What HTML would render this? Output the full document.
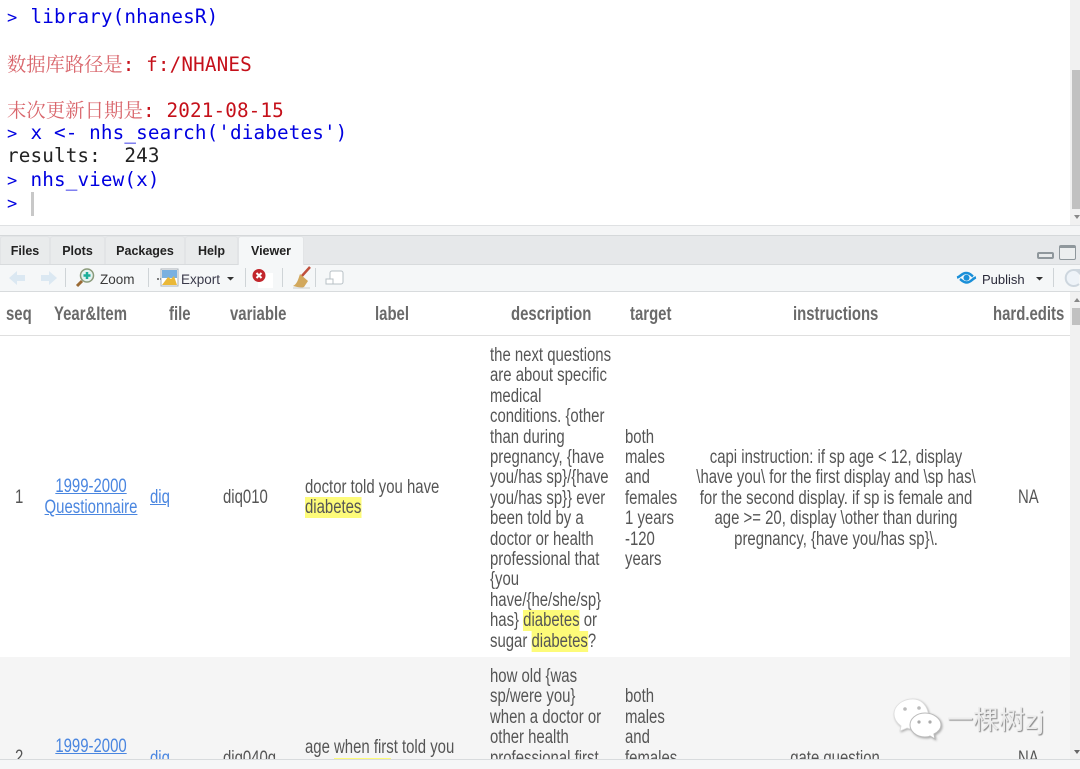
<!DOCTYPE html>
<html><head><meta charset="utf-8"><style>
html,body{margin:0;padding:0;width:1080px;height:769px;overflow:hidden;background:#fff}
div,span{box-sizing:border-box}
.a{position:absolute}
.c{position:absolute;left:7px;font:19.3px/23px "DejaVu Sans Mono","Liberation Mono",monospace;white-space:pre;letter-spacing:.13px;color:#0000e0}
.c b{display:inline-block;width:11.75px;font-weight:normal;font-size:17px}
.r{color:#c5101a}
.z{font-family:"Noto Serif CJK SC",serif;font-size:19.3px;color:#d9666c;letter-spacing:0}
.tab{position:absolute;top:236px;height:28px;background:#e9ebec;border:1px solid #e2e4e6;border-bottom:none;border-radius:3px 3px 0 0;font:bold 12.5px/29px "Liberation Sans",sans-serif;color:#222;text-align:center}
.tb{position:absolute;font:13.500px/17px "Liberation Sans",sans-serif;color:#333;white-space:pre}
.sep{position:absolute;top:268px;width:1px;height:19px;background:#cfd4d7}
.t{position:absolute;font:19px/20.4px "Liberation Sans",sans-serif;color:#555;white-space:pre;transform:scaleX(.785);transform-origin:0 0;margin-top:2px}
.m{transform-origin:50% 0;text-align:center;width:400px}
.h{font-weight:bold;color:#6a6a6a;margin-top:1.500px}
a{color:#4a86e0;text-decoration:underline}
mark{background:#fdfb79;color:#555}
</style></head><body>
<div class="a" style="left:1070px;top:0;width:10px;height:225px;background:#f1f1f1"></div>
<div class="a" style="left:1072px;top:70px;width:8px;height:139px;background:#c1c1c1"></div>
<div class="a" style="left:1074px;top:215px;width:0;height:0;border:3px solid transparent;border-top:4px solid #888"></div>

<div class="c" style="top:5px"><b>&gt;</b> library(nhanesR)</div>
<div class="c r" style="top:52px"><span class="z">数据库路径是</span>: f:/NHANES</div>
<div class="c r" style="top:98px"><span class="z" style="letter-spacing:.15px">末次更新日期是</span>: 2021-08-15</div>
<div class="c" style="top:121px"><b>&gt;</b> x &lt;- nhs_search('diabetes')</div>
<div class="c" style="top:144px;color:#222">results:  243</div>
<div class="c" style="top:168px"><b>&gt;</b> nhs_view(x)</div>
<div class="c" style="top:191px"><b>&gt;</b></div>
<div class="a" style="left:31px;top:192px;width:3px;height:24px;background:#c8c8c8"></div>

<div class="a" style="left:0;top:225px;width:1080px;height:11px;background:#f4f5f6;border-top:1px solid #dfe1e3"></div>
<div class="a" style="left:0;top:235px;width:1080px;height:29px;background:#e6e8ea;border-top:1px solid #d5d8da"></div>
<div class="tab" style="left:0;width:50px">Files</div>
<div class="tab" style="left:50px;width:55px">Plots</div>
<div class="tab" style="left:105px;width:80px">Packages</div>
<div class="tab" style="left:185px;width:53px">Help</div>
<div class="tab" style="left:238px;width:66px;background:#f5f7f8;height:29px;z-index:2">Viewer</div>
<div class="a" style="left:1037px;top:252px;width:17px;height:7px;background:#e8eaeb;border:2px solid #8f979c;border-radius:2px"></div>
<div class="a" style="left:1059px;top:245px;width:17px;height:15px;border:1.5px solid #8f979c;border-top:3px solid #8f979c;border-radius:2px;background:#eceeef"></div>

<div class="a" style="left:0;top:264px;width:1080px;height:28px;background:#f5f7f8;border-top:1px solid #d8dbdd;border-bottom:1px solid #d8dbdd"></div>
<svg class="a" style="left:0;top:262px" width="1080" height="32">
<path d="M9 16l8-7v4h8v6h-8v4z" fill="#dbe8f2"/>
<path d="M57 16l-8-7v4h-8v6h8v4z" fill="#dbe8f2"/>
<circle cx="87" cy="13.500" r="6.500" fill="#e4f2f0" stroke="#8a9a7a" stroke-width="1.500"/>
<path d="M87 10v7M83.500 13.500h7" stroke="#1cae9a" stroke-width="2.500"/>
<path d="M82 19l-5 5" stroke="#9a6a34" stroke-width="3"/>
<path d="M157 17h8" stroke="#555" stroke-width="1.500" stroke-dasharray="2 1"/>
<rect x="161" y="7" width="17" height="17" fill="#fff" stroke="#aab2b8"/>
<path d="M162 8h15v8h-15z" fill="#7ab0e0"/><path d="M162 23l6-8 3 2 3-3 3 9z" fill="#eab838"/>
<rect x="258" y="11" width="15" height="15" fill="#fff"/>
<circle cx="259" cy="13.500" r="6.500" fill="#c2262c"/>
<path d="M256.500 11l5 5M261.500 11l-5 5" stroke="#fff" stroke-width="2"/>
<path d="M310 5l-9 10" stroke="#c0503c" stroke-width="2.500"/>
<path d="M300 12l8 7-4 6c-3 1-7 0-11-1 4-2 5-6 7-12z" fill="#d2a85c"/>
<path d="M293 26h17" stroke="#ccc" stroke-width="1"/>
<rect x="330" y="9" width="13" height="13" rx="2" fill="#fff" stroke="#b8c0c6"/>
<rect x="326" y="17" width="7" height="5" fill="#fff" stroke="#b8c0c6"/>
<path d="M957 15.500c3-.5 5-4.500 9-4.500s5 2 7 3.500M976 15.500c-3 .5-5 5-9 5s-5-2-7-3.500" fill="none" stroke="#1a8fd8" stroke-width="2.500"/>
<circle cx="966.500" cy="15.800" r="3" fill="#1a8fd8"/>
<path d="M1036 15h7l-3.500 3.500zM227 15h7l-3.500 3.500z" fill="#333"/>
<path d="M1079 10a8 8 0 1 0 0 12" fill="#eef3f8" stroke="#cdd6de" stroke-width="2"/>
<path d="M1074 7h6v6z" fill="#cdd6de"/>
</svg>
<div class="sep" style="left:65px"></div><div class="sep" style="left:148px"></div><div class="sep" style="left:245px"></div><div class="sep" style="left:282px"></div><div class="sep" style="left:315px"></div><div class="sep" style="left:1053px"></div>
<div class="tb" style="left:100px;top:271px;color:#3a3a3a">Zoom</div>
<div class="tb" style="left:181px;top:271px;color:#3a3a4a">Export</div>
<div class="tb" style="left:982px;top:271px;color:#2a2a3a;font-size:13px">Publish</div>

<div class="a" style="left:0;top:292px;width:1070px;height:467px;overflow:hidden;background:#fff">
<div class="a" style="left:0;top:365px;width:1070px;height:110px;background:#f5f5f5"></div>
<div class="a" style="left:0;top:43px;width:1070px;height:1px;background:#dfdfdf"></div>
<div class="t h" style="left:6px;top:11px">seq</div>
<div class="t h" style="left:54px;top:11px">Year&amp;Item</div>
<div class="t h" style="left:169px;top:11px">file</div>
<div class="t h" style="left:230px;top:11px">variable</div>
<div class="t h" style="left:375px;top:11px">label</div>
<div class="t h" style="left:511px;top:11px">description</div>
<div class="t h" style="left:630px;top:11px">target</div>
<div class="t h" style="left:793px;top:11px">instructions</div>
<div class="t h" style="left:993px;top:11px">hard.edits</div>

<div class="t" style="left:15px;top:194px">1</div>
<div class="t m" style="left:-109px;top:183px"><a>1999-2000</a></div>
<div class="t m" style="left:-109px;top:204px"><a>Questionnaire</a></div>
<div class="t" style="left:150px;top:194px"><a>diq</a></div>
<div class="t" style="left:223px;top:194px">diq010</div>
<div class="t" style="left:305px;top:184px">doctor told you have</div>
<div class="t" style="left:305px;top:204px"><mark>diabetes</mark></div>

<div class="t" style="left:490px;top:52px">the next questions</div>
<div class="t" style="left:490px;top:72.400px">are about specific</div>
<div class="t" style="left:490px;top:92.800px">medical</div>
<div class="t" style="left:490px;top:113.200px">conditions. {other</div>
<div class="t" style="left:490px;top:133.600px">than during</div>
<div class="t" style="left:490px;top:154px">pregnancy, {have</div>
<div class="t" style="left:490px;top:174.400px">you/has sp}/{have</div>
<div class="t" style="left:490px;top:194.800px">you/has sp}} ever</div>
<div class="t" style="left:490px;top:215.200px">been told by a</div>
<div class="t" style="left:490px;top:235.600px">doctor or health</div>
<div class="t" style="left:490px;top:256px">professional that</div>
<div class="t" style="left:490px;top:276.400px">{you</div>
<div class="t" style="left:490px;top:296.800px">have/{he/she/sp}</div>
<div class="t" style="left:490px;top:317.200px">has} <mark>diabetes</mark> or</div>
<div class="t" style="left:490px;top:337.600px">sugar <mark>diabetes</mark>?</div>

<div class="t" style="left:625px;top:133.600px">both</div>
<div class="t" style="left:625px;top:154px">males</div>
<div class="t" style="left:625px;top:174.400px">and</div>
<div class="t" style="left:625px;top:194.800px">females</div>
<div class="t" style="left:625px;top:215.200px">1 years</div>
<div class="t" style="left:625px;top:235.600px">-120</div>
<div class="t" style="left:625px;top:256px">years</div>

<div class="t m" style="left:636px;top:154px">capi instruction: if sp age &lt; 12, display</div>
<div class="t m" style="left:636px;top:174.400px">\have you\ for the first display and \sp has\</div>
<div class="t m" style="left:636px;top:194.800px">for the second display. if sp is female and</div>
<div class="t m" style="left:636px;top:215.200px">age &gt;= 20, display \other than during</div>
<div class="t m" style="left:636px;top:235.600px">pregnancy, {have you/has sp}\.</div>
<div class="t" style="left:1018px;top:194px">NA</div>

<div class="t" style="left:15px;top:454px">2</div>
<div class="t m" style="left:-109px;top:443px"><a>1999-2000</a></div>
<div class="t" style="left:150px;top:455px"><a>diq</a></div>
<div class="t" style="left:223px;top:455px">diq040g</div>
<div class="t" style="left:305px;top:444px">age when first told you</div>
<div class="a" style="left:334px;top:466px;width:57px;height:3px;background:#fdfb79"></div>
<div class="t" style="left:490px;top:373px">how old {was</div>
<div class="t" style="left:490px;top:393.400px">sp/were you}</div>
<div class="t" style="left:490px;top:413.800px">when a doctor or</div>
<div class="t" style="left:490px;top:434.200px">other health</div>
<div class="t" style="left:490px;top:454.600px">professional first</div>
<div class="t" style="left:625px;top:393.400px">both</div>
<div class="t" style="left:625px;top:413.800px">males</div>
<div class="t" style="left:625px;top:434.200px">and</div>
<div class="t" style="left:625px;top:454.600px">females</div>
<div class="t m" style="left:635px;top:455px">gate question</div>
<div class="t" style="left:1018px;top:455px">NA</div>
</div>

<div class="a" style="left:1070px;top:292px;width:10px;height:467px;background:#f1f1f1"></div>
<div class="a" style="left:1072px;top:308px;width:8px;height:17px;background:#c1c1c1"></div>
<div class="a" style="left:1074px;top:298px;width:0;height:0;border:3px solid transparent;border-bottom:4px solid #888;border-top:none"></div>
<div class="a" style="left:1074px;top:750px;width:0;height:0;border:3px solid transparent;border-top:4px solid #666;border-bottom:none"></div>
<div class="a" style="left:0;top:759px;width:1080px;height:10px;background:#f5f6f7;border-top:1px solid #d8dbdd"></div>

<svg class="a" style="left:892px;top:696px;filter:drop-shadow(1px 1px 1px #aaa)" width="52" height="44">
<path d="M21 3c-11 0-19 7-19 15 0 5 3 9 7 12l-1 5 7-3c3 1 5 1 8 1 6 0 10-3 13-8 1-2 1-6 0-9-2-8-8-13-15-13z" fill="#fff" stroke="#ddd" stroke-width=".8"/>
<path d="M33 17c-9 0-15 6-15 12s6 12 15 12c2 0 4 0 5-1l5 3-1-5c4-2 7-5 7-9 0-6-7-12-16-12z" fill="#fff" stroke="#bbb" stroke-width="1"/>
<circle cx="13" cy="13" r="1.800" fill="#bbb"/><circle cx="27" cy="12" r="1.800" fill="#bbb"/>
<circle cx="27" cy="26" r="1.600" fill="#aaa"/><circle cx="38" cy="26" r="1.600" fill="#aaa"/>
</svg>
<div class="a" style="left:947px;top:702px;font:26px/34px 'Noto Sans CJK SC',sans-serif;color:#ececec;text-shadow:1px 1px 1px #888;white-space:pre">一棵树<span style="font-family:'Liberation Sans',sans-serif;font-size:26px">zj</span></div>
</body></html>
